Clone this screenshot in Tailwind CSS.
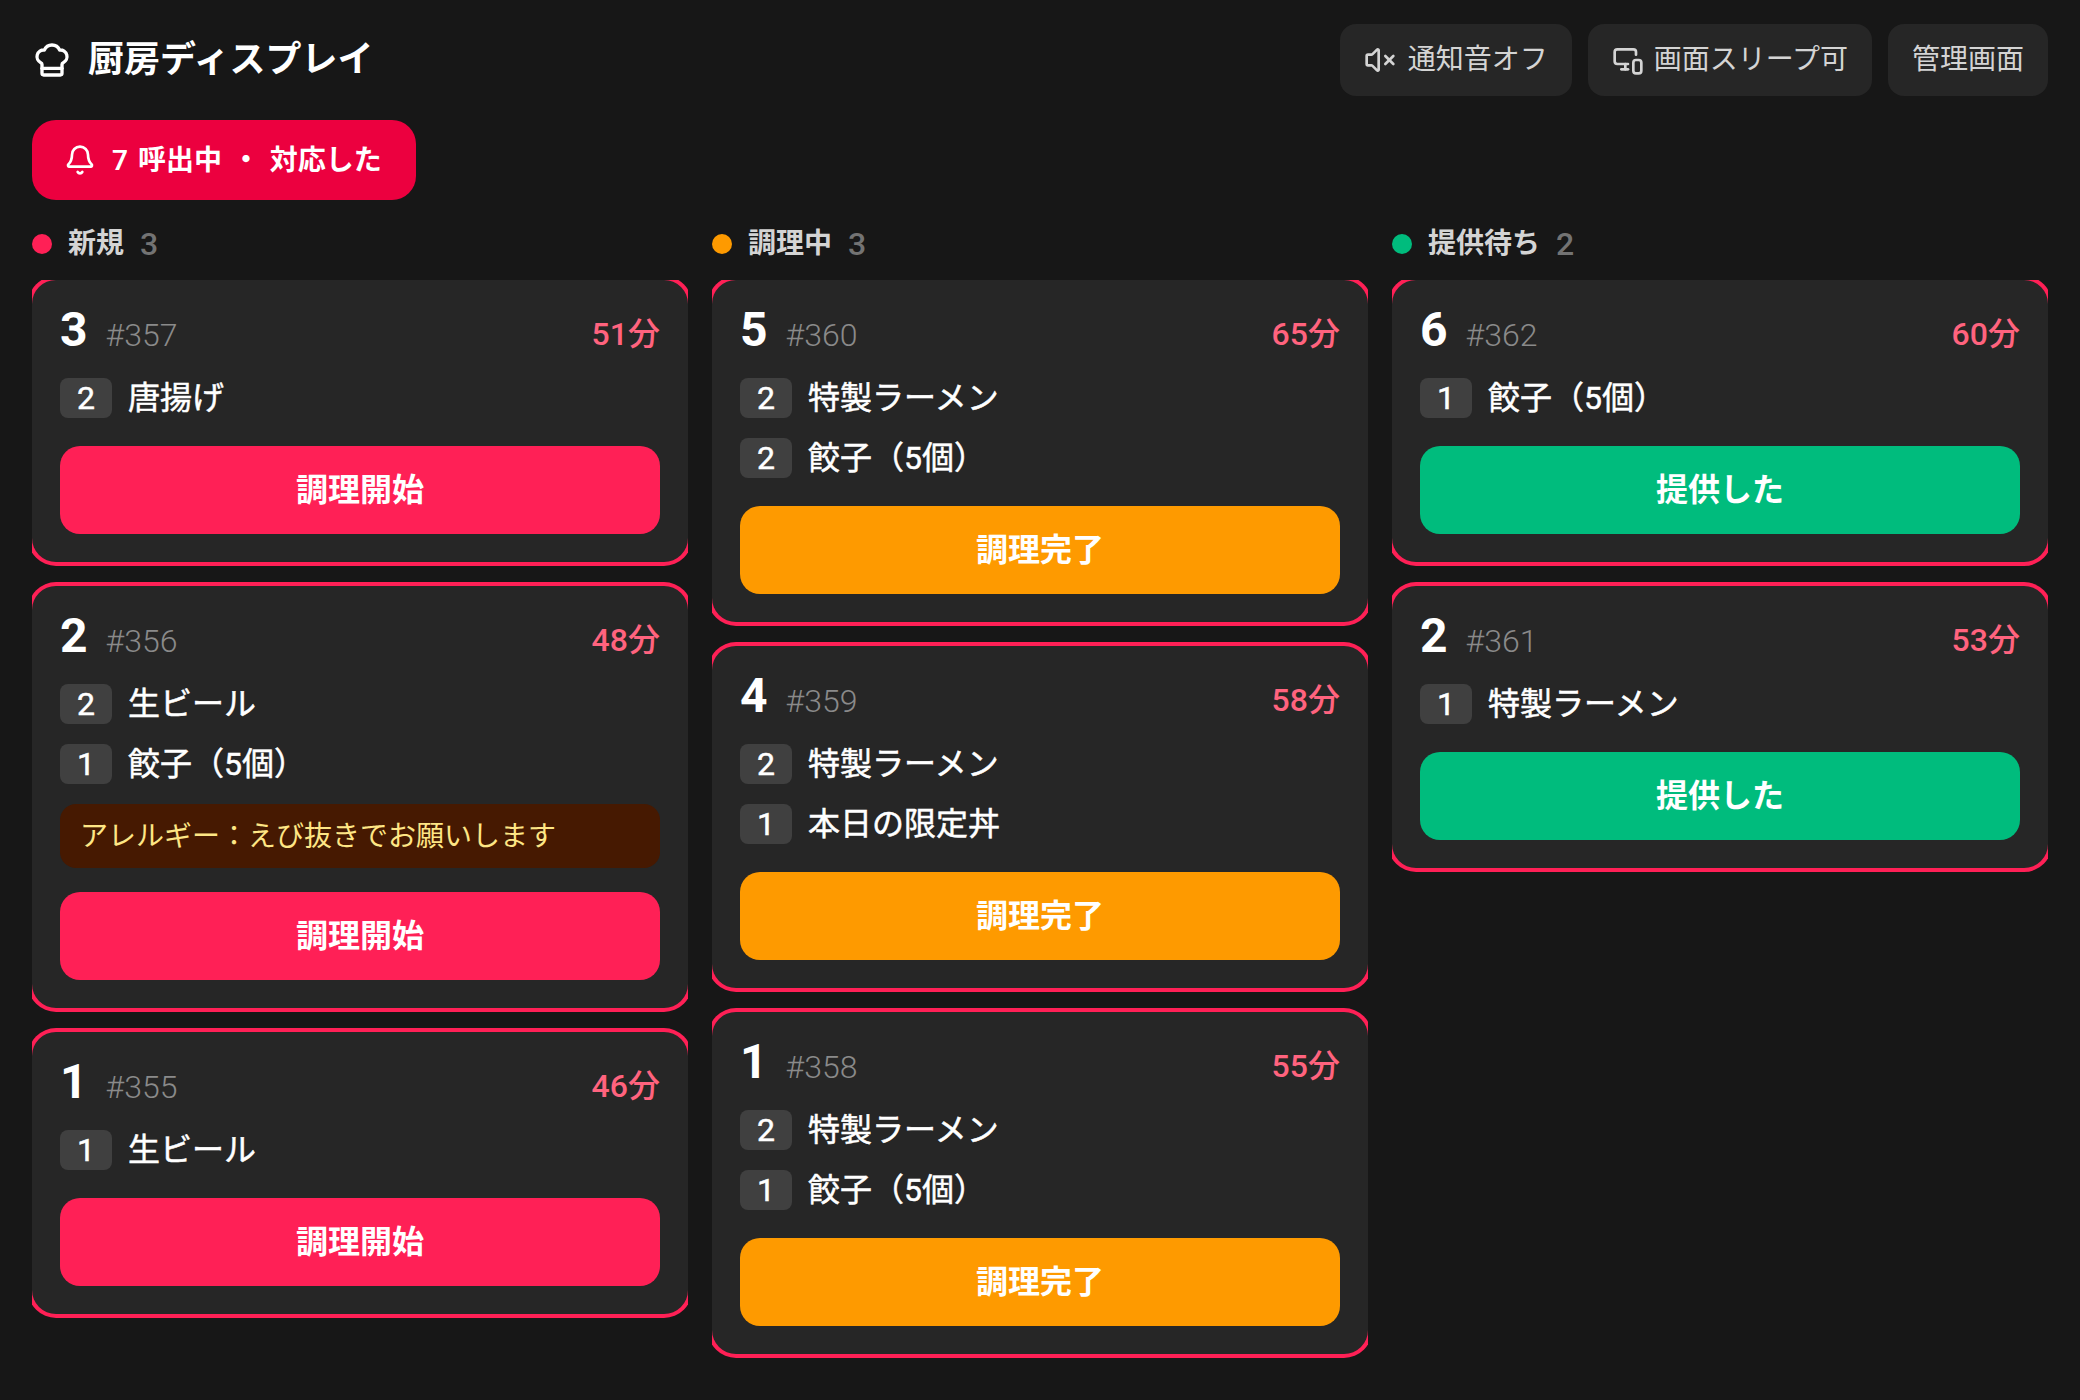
<!DOCTYPE html>
<html lang="ja">
  <head>
    <meta charset="UTF-8" />
    <title>厨房ディスプレイ</title>
    <script src="https://cdn.jsdelivr.net/npm/@tailwindcss/browser@4"></script>
    <style>
      body {
        font-family: "Roboto", "Noto Sans CJK JP", sans-serif;
      }
    </style>
  </head>
  <body class="bg-[#171717] min-h-screen text-white">
    <div class="px-8 pt-6">
      <!-- ヘッダー -->
      <header class="flex items-center justify-between h-[72px]">
        <div class="flex items-center gap-4">
          <svg class="w-10 h-10" viewBox="0 0 24 24" fill="none" stroke="currentColor" stroke-width="2" stroke-linecap="round" stroke-linejoin="round"><path d="M17 21a1 1 0 0 0 1-1v-5.35c0-.457.316-.844.727-1.041a4 4 0 0 0-2.134-7.589 5 5 0 0 0-9.186 0 4 4 0 0 0-2.134 7.588c.411.198.727.585.727 1.041V20a1 1 0 0 0 1 1Z"/><path d="M6 17h12"/></svg>
          <h1 class="text-[36px] font-bold leading-none">厨房ディスプレイ</h1>
        </div>
        <div class="flex gap-4 text-[28px] text-[#d4d4d4]">
          <button class="h-[72px] px-6 rounded-2xl bg-[#262626] flex items-center gap-3">
            <svg class="w-8 h-8" viewBox="0 0 24 24" fill="none" stroke="currentColor" stroke-width="2" stroke-linecap="round" stroke-linejoin="round"><path d="M11 4.702a.705.705 0 0 0-1.203-.498L6.413 7.587A1.4 1.4 0 0 1 5.416 8H3a1 1 0 0 0-1 1v6a1 1 0 0 0 1 1h2.416a1.4 1.4 0 0 1 .997.413l3.383 3.384A.705.705 0 0 0 11 19.298z"/><line x1="22" x2="16" y1="9" y2="15"/><line x1="16" x2="22" y1="9" y2="15"/></svg>
            通知音オフ
          </button>
          <button class="h-[72px] px-6 rounded-2xl bg-[#262626] flex items-center gap-[10px]">
            <svg class="w-8 h-8" viewBox="0 0 24 24" fill="none" stroke="currentColor" stroke-width="2" stroke-linecap="round" stroke-linejoin="round"><path d="M18 8V6a2 2 0 0 0-2-2H4a2 2 0 0 0-2 2v7a2 2 0 0 0 2 2h8"/><path d="M10 19v-3.96 3.15"/><path d="M7 19h5"/><rect width="6" height="10" x="16" y="12" rx="2"/></svg>
            画面スリープ可
          </button>
          <button class="h-[72px] px-6 rounded-2xl bg-[#262626] flex items-center">管理画面</button>
        </div>
      </header>

      <!-- 呼出 -->
      <button class="mt-6 h-20 w-[384px] rounded-3xl bg-[#ec003f] flex items-center gap-4 pl-8 text-[28px] font-semibold [word-spacing:3px]">
        <svg class="w-8 h-8" viewBox="0 0 24 24" fill="none" stroke="currentColor" stroke-width="2" stroke-linecap="round" stroke-linejoin="round"><path d="M10.268 21a2 2 0 0 0 3.464 0"/><path d="M3.262 15.326A1 1 0 0 0 4 17h16a1 1 0 0 0 .74-1.673C19.41 13.956 18 12.499 18 8A6 6 0 0 0 6 8c0 4.499-1.411 5.956-2.738 7.326"/></svg>
        <span class="pt-0.5">7 呼出中 ・ 対応した</span>
      </button>

      <div class="grid grid-cols-3 gap-6 mt-6">
        <!-- 新規 -->
        <section>
          <div class="flex items-center gap-4 h-10 mb-4 text-[28px] font-semibold text-[#d4d4d4]">
            <span class="w-5 h-5 rounded-full bg-[#ff2056]"></span><span>新規</span><span class="font-medium text-[32px] text-[#737373]">3</span>
          </div>
          <div class="overflow-hidden pb-1 flex flex-col gap-6">
            <article class="bg-[#262626] rounded-3xl ring-4 ring-[#ff2056] p-7">
              <div class="flex items-center justify-between h-12 mb-[22px]">
                <div class="flex items-baseline gap-[18px]"><span class="text-[48px] font-bold leading-none">3</span><span class="text-[32px] font-light text-[#8a8a8a]">#357</span></div>
                <span class="text-[32px] font-medium text-[#ff637e] pt-1">51分</span>
              </div>
              <div class="flex flex-col gap-5">
                <div class="flex items-center gap-4 text-[32px] leading-10 [-webkit-text-stroke:0.5px_white]"><span class="w-[52px] h-10 rounded-lg bg-[#404040] text-center">2</span><span>唐揚げ</span></div>
              </div>
              <button class="mt-7 w-full h-[88px] rounded-[20px] bg-[#ff2056] text-[32px] font-semibold">調理開始</button>
            </article>
            <article class="bg-[#262626] rounded-3xl ring-4 ring-[#ff2056] p-7">
              <div class="flex items-center justify-between h-12 mb-[22px]">
                <div class="flex items-baseline gap-[18px]"><span class="text-[48px] font-bold leading-none">2</span><span class="text-[32px] font-light text-[#8a8a8a]">#356</span></div>
                <span class="text-[32px] font-medium text-[#ff637e] pt-1">48分</span>
              </div>
              <div class="flex flex-col gap-5">
                <div class="flex items-center gap-4 text-[32px] leading-10 [-webkit-text-stroke:0.5px_white]"><span class="w-[52px] h-10 rounded-lg bg-[#404040] text-center">2</span><span>生ビール</span></div>
                <div class="flex items-center gap-4 text-[32px] leading-10 [-webkit-text-stroke:0.5px_white]"><span class="w-[52px] h-10 rounded-lg bg-[#404040] text-center">1</span><span>餃子（5個）</span></div>
              </div>
              <div class="mt-5 h-16 rounded-2xl bg-[#461901] text-[#fee685] text-[28px] flex items-center px-5"><span class="pt-0.5">アレルギー：えび抜きでお願いします</span></div>
              <button class="mt-6 w-full h-[88px] rounded-[20px] bg-[#ff2056] text-[32px] font-semibold">調理開始</button>
            </article>
            <article class="bg-[#262626] rounded-3xl ring-4 ring-[#ff2056] p-7">
              <div class="flex items-center justify-between h-12 mb-[22px]">
                <div class="flex items-baseline gap-[18px]"><span class="text-[48px] font-bold leading-none">1</span><span class="text-[32px] font-light text-[#8a8a8a]">#355</span></div>
                <span class="text-[32px] font-medium text-[#ff637e] pt-1">46分</span>
              </div>
              <div class="flex flex-col gap-5">
                <div class="flex items-center gap-4 text-[32px] leading-10 [-webkit-text-stroke:0.5px_white]"><span class="w-[52px] h-10 rounded-lg bg-[#404040] text-center">1</span><span>生ビール</span></div>
              </div>
              <button class="mt-7 w-full h-[88px] rounded-[20px] bg-[#ff2056] text-[32px] font-semibold">調理開始</button>
            </article>
          </div>
        </section>

        <!-- 調理中 -->
        <section>
          <div class="flex items-center gap-4 h-10 mb-4 text-[28px] font-semibold text-[#d4d4d4]">
            <span class="w-5 h-5 rounded-full bg-[#fe9a00]"></span><span>調理中</span><span class="font-medium text-[32px] text-[#737373]">3</span>
          </div>
          <div class="overflow-hidden pb-1 flex flex-col gap-6">
            <article class="bg-[#262626] rounded-3xl ring-4 ring-[#ff2056] p-7">
              <div class="flex items-center justify-between h-12 mb-[22px]">
                <div class="flex items-baseline gap-[18px]"><span class="text-[48px] font-bold leading-none">5</span><span class="text-[32px] font-light text-[#8a8a8a]">#360</span></div>
                <span class="text-[32px] font-medium text-[#ff637e] pt-1">65分</span>
              </div>
              <div class="flex flex-col gap-5">
                <div class="flex items-center gap-4 text-[32px] leading-10 [-webkit-text-stroke:0.5px_white]"><span class="w-[52px] h-10 rounded-lg bg-[#404040] text-center">2</span><span>特製ラーメン</span></div>
                <div class="flex items-center gap-4 text-[32px] leading-10 [-webkit-text-stroke:0.5px_white]"><span class="w-[52px] h-10 rounded-lg bg-[#404040] text-center">2</span><span>餃子（5個）</span></div>
              </div>
              <button class="mt-7 w-full h-[88px] rounded-[20px] bg-[#fe9a00] text-[32px] font-semibold">調理完了</button>
            </article>
            <article class="bg-[#262626] rounded-3xl ring-4 ring-[#ff2056] p-7">
              <div class="flex items-center justify-between h-12 mb-[22px]">
                <div class="flex items-baseline gap-[18px]"><span class="text-[48px] font-bold leading-none">4</span><span class="text-[32px] font-light text-[#8a8a8a]">#359</span></div>
                <span class="text-[32px] font-medium text-[#ff637e] pt-1">58分</span>
              </div>
              <div class="flex flex-col gap-5">
                <div class="flex items-center gap-4 text-[32px] leading-10 [-webkit-text-stroke:0.5px_white]"><span class="w-[52px] h-10 rounded-lg bg-[#404040] text-center">2</span><span>特製ラーメン</span></div>
                <div class="flex items-center gap-4 text-[32px] leading-10 [-webkit-text-stroke:0.5px_white]"><span class="w-[52px] h-10 rounded-lg bg-[#404040] text-center">1</span><span>本日の限定丼</span></div>
              </div>
              <button class="mt-7 w-full h-[88px] rounded-[20px] bg-[#fe9a00] text-[32px] font-semibold">調理完了</button>
            </article>
            <article class="bg-[#262626] rounded-3xl ring-4 ring-[#ff2056] p-7">
              <div class="flex items-center justify-between h-12 mb-[22px]">
                <div class="flex items-baseline gap-[18px]"><span class="text-[48px] font-bold leading-none">1</span><span class="text-[32px] font-light text-[#8a8a8a]">#358</span></div>
                <span class="text-[32px] font-medium text-[#ff637e] pt-1">55分</span>
              </div>
              <div class="flex flex-col gap-5">
                <div class="flex items-center gap-4 text-[32px] leading-10 [-webkit-text-stroke:0.5px_white]"><span class="w-[52px] h-10 rounded-lg bg-[#404040] text-center">2</span><span>特製ラーメン</span></div>
                <div class="flex items-center gap-4 text-[32px] leading-10 [-webkit-text-stroke:0.5px_white]"><span class="w-[52px] h-10 rounded-lg bg-[#404040] text-center">1</span><span>餃子（5個）</span></div>
              </div>
              <button class="mt-7 w-full h-[88px] rounded-[20px] bg-[#fe9a00] text-[32px] font-semibold">調理完了</button>
            </article>
          </div>
        </section>

        <!-- 提供待ち -->
        <section>
          <div class="flex items-center gap-4 h-10 mb-4 text-[28px] font-semibold text-[#d4d4d4]">
            <span class="w-5 h-5 rounded-full bg-[#00bc7d]"></span><span>提供待ち</span><span class="font-medium text-[32px] text-[#737373]">2</span>
          </div>
          <div class="overflow-hidden pb-1 flex flex-col gap-6">
            <article class="bg-[#262626] rounded-3xl ring-4 ring-[#ff2056] p-7">
              <div class="flex items-center justify-between h-12 mb-[22px]">
                <div class="flex items-baseline gap-[18px]"><span class="text-[48px] font-bold leading-none">6</span><span class="text-[32px] font-light text-[#8a8a8a]">#362</span></div>
                <span class="text-[32px] font-medium text-[#ff637e] pt-1">60分</span>
              </div>
              <div class="flex flex-col gap-5">
                <div class="flex items-center gap-4 text-[32px] leading-10 [-webkit-text-stroke:0.5px_white]"><span class="w-[52px] h-10 rounded-lg bg-[#404040] text-center">1</span><span>餃子（5個）</span></div>
              </div>
              <button class="mt-7 w-full h-[88px] rounded-[20px] bg-[#00bc7d] text-[32px] font-semibold">提供した</button>
            </article>
            <article class="bg-[#262626] rounded-3xl ring-4 ring-[#ff2056] p-7">
              <div class="flex items-center justify-between h-12 mb-[22px]">
                <div class="flex items-baseline gap-[18px]"><span class="text-[48px] font-bold leading-none">2</span><span class="text-[32px] font-light text-[#8a8a8a]">#361</span></div>
                <span class="text-[32px] font-medium text-[#ff637e] pt-1">53分</span>
              </div>
              <div class="flex flex-col gap-5">
                <div class="flex items-center gap-4 text-[32px] leading-10 [-webkit-text-stroke:0.5px_white]"><span class="w-[52px] h-10 rounded-lg bg-[#404040] text-center">1</span><span>特製ラーメン</span></div>
              </div>
              <button class="mt-7 w-full h-[88px] rounded-[20px] bg-[#00bc7d] text-[32px] font-semibold">提供した</button>
            </article>
          </div>
        </section>
      </div>
    </div>
  </body>
</html>
